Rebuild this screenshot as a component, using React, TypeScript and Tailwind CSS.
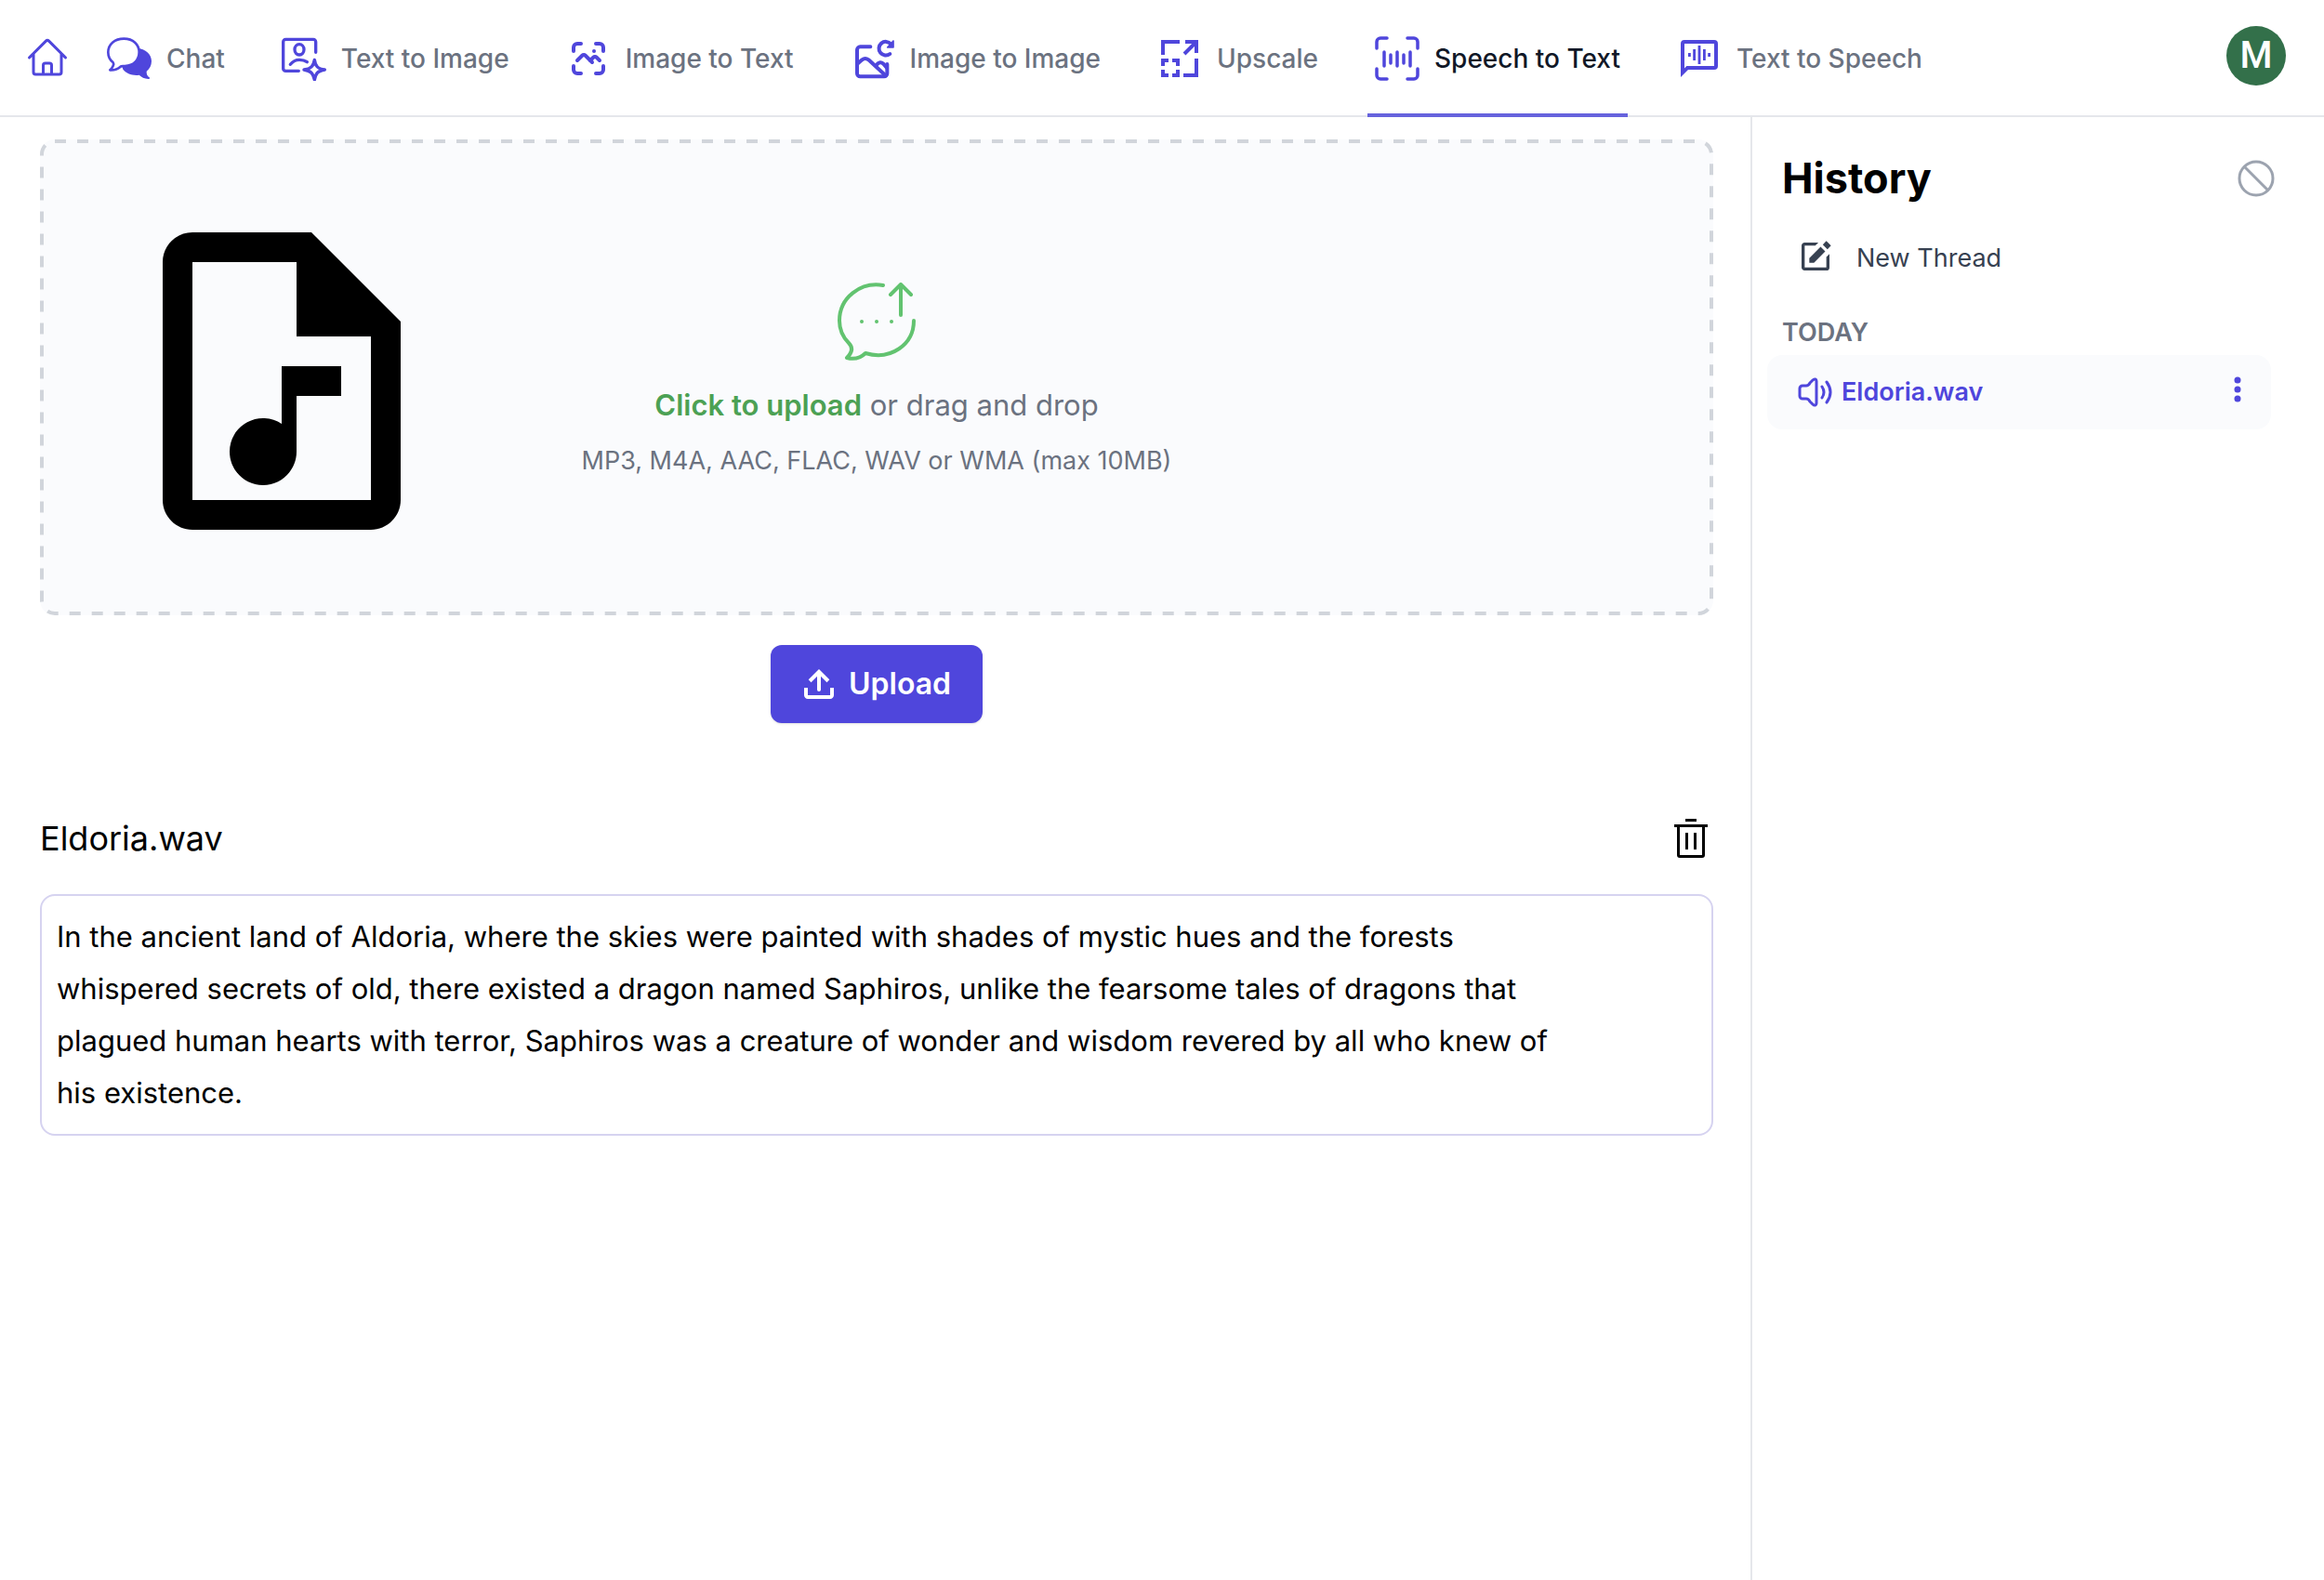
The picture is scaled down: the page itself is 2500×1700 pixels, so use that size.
import React from "react";
import { HiOutlineHome, HiOutlineNoSymbol } from "react-icons/hi2";
import { TbPhotoScan } from "react-icons/tb";
import { MdOutlineAudioFile } from "react-icons/md";
import { CgSoftwareUpload } from "react-icons/cg";
import { BiSolidEdit } from "react-icons/bi";

const iconBox = "size-12 shrink-0 text-[#4f46dc]";

function ChatIcon() {
  return (
    <svg className={iconBox} viewBox="45 51 144 144" aria-hidden="true">
      <path
        fill="currentColor"
        d="M140 89C172 91 189 110 189 131C189 145 183 155 173 164C172 173 176 180 182 184C185 187 183 189 179 189C166 188 156 183 149 176C127 179 107 171 97 158L92 140Z"
      />
      <path
        fill="white"
        stroke="currentColor"
        strokeWidth="8"
        strokeLinejoin="round"
        d="M100 59C70 59 49 77 49 103C49 117 55 128 65 136C69 141 64 152 55 160C68 161 80 157 89 149C93 146 98 148 103 147C131 146 149 128 149 103C149 77 129 59 100 59Z"
      />
    </svg>
  );
}

function PortraitSparkIcon() {
  return (
    <svg
      className={iconBox}
      viewBox="615 52 144 144"
      fill="none"
      stroke="currentColor"
      strokeWidth="10"
      strokeLinecap="round"
      strokeLinejoin="round"
      aria-hidden="true"
    >
      <path d="M725 104V70a8 8 0 0 0-8-8H628a8 8 0 0 0-8 8v86a8 8 0 0 0 8 8h42" />
      <ellipse cx="672" cy="95" rx="15" ry="17" />
      <path d="M643 143C650 134 660 128 672 128C682 128 690 130 697 135" />
      <path d="M721 128C724 149 731 157 754 160C731 164 725 171 721 193C716 171 710 164 687 160C710 157 717 149 721 128Z" />
    </svg>
  );
}

function ImageRefreshIcon() {
  return (
    <svg
      className={iconBox}
      viewBox="945 54 144 144"
      fill="none"
      stroke="currentColor"
      strokeWidth="12"
      strokeLinecap="round"
      strokeLinejoin="round"
      aria-hidden="true"
    >
      <path d="M1009 88H976a10 10 0 0 0-10 10v76a10 10 0 0 0 10 10h77a10 10 0 0 0 10-10V144" />
      <path d="M967 143L982 130Q992 122 1003 130L1058 181" />
      <path d="M1029 146Q1040 133 1051 143L1062 156" />
      <path d="M1072 111A22 22 0 1 1 1075 79" />
      <path d="M1083 69V90H1064Z" fill="currentColor" strokeWidth="5" />
    </svg>
  );
}

function UpscaleIcon() {
  return (
    <svg className={iconBox} viewBox="0 0 24 24" fill="none" stroke="currentColor" strokeWidth="2" aria-hidden="true">
      <path d="M12 3H3v7" />
      <path d="M15 3h6v6M20.5 3.5L14.5 9.5" />
      <path d="M21 12v9h-7" />
      <path d="M3 16v-3h3M8 13h3v3M3 18v3h3M8 21h3v-3" />
    </svg>
  );
}

function SpeechScanIcon() {
  return (
    <svg
      className={iconBox}
      viewBox="0 0 48 48"
      fill="none"
      stroke="currentColor"
      strokeWidth="3.5"
      strokeLinecap="round"
      aria-hidden="true"
    >
      <path d="M2 13V6a4 4 0 0 1 4-4h7M35 2h7a4 4 0 0 1 4 4v7M46 35v7a4 4 0 0 1-4 4h-7M13 46H6a4 4 0 0 1-4-4v-7" />
      <path d="M10 17v15M17 20v9M24 17v15M31 20v9M38 17v15" />
    </svg>
  );
}

function VoiceBubbleIcon() {
  return (
    <svg className={iconBox} viewBox="0 0 24 24" fill="currentColor" aria-hidden="true">
      <path d="M20 2H4a2 2 0 0 0-2 2v18l4-4h14a2 2 0 0 0 2-2V4a2 2 0 0 0-2-2Zm0 14H5.2L4 17.2V4h16Z" />
      <path d="M6 9h1.4v2H6zM8.6 7H10v6H8.6zM11.3 5h1.4v10h-1.4zM14 7h1.4v6H14zM16.6 9H18v2h-1.4z" />
    </svg>
  );
}

function ChatUploadIcon() {
  return (
    <svg
      className="size-[84px] text-[#62c370]"
      viewBox="0 0 84 84"
      fill="none"
      stroke="currentColor"
      strokeWidth="4"
      strokeLinecap="round"
      strokeLinejoin="round"
      aria-hidden="true"
    >
      <path d="M49 3C25 -1 2 16 2 41C2 51 6 59 12 65C17 70 16 75 10 81C18 83 25 81 30 76C57 84 82 67 82 41" />
      <path d="M68 35V2M57 13L68 2L79 13" />
      <path d="M26 42h.01M42 42h.01M58 42h.01" strokeWidth="4" />
    </svg>
  );
}

function SpeakerIcon() {
  return (
    <svg
      className="size-10"
      viewBox="0 0 40 40"
      fill="none"
      stroke="currentColor"
      strokeWidth="3"
      strokeLinecap="round"
      strokeLinejoin="round"
      aria-hidden="true"
    >
      <path d="M3 16a3 3 0 0 1 3-3h4c2 0 3-1 4-3l3-3c2-2 4-1 4 1v24c0 2-2 3-4 1l-3-3c-1-2-2-3-4-3H6a3 3 0 0 1-3-3Z" />
      <path d="M27 14q4 6 0 12M32 9q8 11 0 22" />
    </svg>
  );
}

function MoreIcon() {
  return (
    <svg className="size-8" viewBox="0 0 32 32" fill="currentColor" aria-hidden="true">
      <circle cx="16" cy="6" r="3.5" />
      <circle cx="16" cy="16" r="3.5" />
      <circle cx="16" cy="26" r="3.5" />
    </svg>
  );
}

function TrashIcon() {
  return (
    <svg className="size-12" viewBox="0 0 32 32" fill="currentColor" aria-hidden="true">
      <path d="M12 12h2v12h-2zM18 12h2v12h-2zM4 6v2h2v20a2 2 0 0 0 2 2h16a2 2 0 0 0 2-2V8h2V6Zm4 22V8h16v20ZM12 2h8v2h-8z" />
    </svg>
  );
}

function DashedOutline() {
  return (
    <svg className="pointer-events-none absolute inset-0 size-full p-0.5" overflow="visible" aria-hidden="true">
      <rect
        width="100%"
        height="100%"
        rx="14"
        fill="none"
        stroke="#d1d5db"
        strokeWidth="4"
        strokeDasharray="12 12"
      />
    </svg>
  );
}

const tabs = [
  { label: "Chat", icon: <ChatIcon /> },
  { label: "Text to Image", icon: <PortraitSparkIcon /> },
  { label: "Image to Text", icon: <TbPhotoScan className={iconBox} /> },
  { label: "Image to Image", icon: <ImageRefreshIcon /> },
  { label: "Upscale", icon: <UpscaleIcon /> },
  { label: "Speech to Text", icon: <SpeechScanIcon />, active: true },
  { label: "Text to Speech", icon: <VoiceBubbleIcon /> },
];

export default function App() {
  return (
    <div className="flex min-h-screen flex-col bg-white font-['Inter',sans-serif] text-black">
      <header className="flex h-[126px] items-stretch border-b-2 border-gray-200 pr-[41px] pl-[27px]">
        <a href="#home" aria-label="Home" className="flex items-center pr-8">
          <HiOutlineHome className={iconBox} />
        </a>
        <nav className="-mb-0.5 flex gap-[45px]">
          {tabs.map((tab) => (
            <a
              key={tab.label}
              href={"#" + tab.label.toLowerCase().replaceAll(" ", "-")}
              aria-current={tab.active ? "page" : undefined}
              className={
                tab.active
                  ? "flex items-center gap-4 border-b-4 border-[#6663dd] px-2 pt-1 text-[28px] font-medium whitespace-nowrap text-[#111827]"
                  : "flex items-center gap-4 border-b-4 border-transparent px-2 pt-1 text-[28px] font-medium whitespace-nowrap text-[#6b7280]"
              }
            >
              {tab.icon}
              {tab.label}
            </a>
          ))}
        </nav>
        <button
          type="button"
          aria-label="Account"
          className="mt-7 ml-auto size-16 rounded-full bg-[#33704a] font-['Roboto',sans-serif] text-[40px] leading-none font-medium text-white"
        >
          M
        </button>
      </header>

      <div className="flex flex-1">
        <main className="min-w-0 flex-1 pt-6 pr-10 pl-[43px]">
          <label className="relative grid h-[512px] cursor-pointer grid-cols-[1fr_auto_1fr] items-center rounded-2xl bg-[#fafbfd] px-1 pt-2">
            <DashedOutline />
            <MdOutlineAudioFile className="ml-16 size-96" />
            <span className="flex flex-col items-center text-center text-[#6b7280]">
              <ChatUploadIcon />
              <span className="mt-6 text-[31px] leading-12">
                <span className="font-semibold text-[#4ca154]">Click to upload</span> or drag and drop
              </span>
              <span className="mt-4 text-[27px] leading-10">MP3, M4A, AAC, FLAC, WAV or WMA (max 10MB)</span>
            </span>
            <input type="file" accept="audio/*" className="sr-only" />
          </label>

          <div className="mt-8 flex justify-center">
            <button
              type="button"
              className="flex h-[84px] items-center gap-2 rounded-xl bg-[#4f46dc] pr-[34px] pl-7 text-[32px] font-semibold text-white shadow-sm"
            >
              <CgSoftwareUpload className="size-12" />
              Upload
            </button>
          </div>

          <section className="mt-[100px]">
            <div className="flex items-center justify-between">
              <h2 className="text-[36px] leading-12">Eldoria.wav</h2>
              <button type="button" aria-label="Delete transcript">
                <TrashIcon />
              </button>
            </div>
            <div className="mt-9 rounded-2xl border-2 border-[#d6d3f0] p-4">
              <p className="max-w-[1620px] text-[31px] leading-14">
                In the ancient land of Aldoria, where the skies were painted with shades of mystic hues and the forests
                whispered secrets of old, there existed a dragon named Saphiros, unlike the fearsome tales of dragons
                that plagued human hearts with terror, Saphiros was a creature of wonder and wisdom revered by all who
                knew of his existence.
              </p>
            </div>
          </section>
        </main>

        <aside className="w-[617px] shrink-0 border-l-2 border-gray-200 pt-[38px] pr-[57px] pl-4">
          <div className="flex items-center justify-between pl-4">
            <h1 className="text-[45px] leading-14 font-bold">History</h1>
            <button type="button" aria-label="Clear history" className="-mr-2 text-[#9ca3af]">
              <HiOutlineNoSymbol className="size-12" />
            </button>
          </div>
          <button type="button" className="mt-[30px] flex h-14 items-center gap-6 pl-8 text-[27px] text-[#374151]">
            <BiSolidEdit className="mb-1 size-10" />
            New Thread
          </button>
          <h2 className="mt-8 pl-4 text-[27px] leading-10 font-semibold text-[#6b7280]">TODAY</h2>
          <div className="mt-1 flex h-20 items-center rounded-2xl bg-[#fafbfd] pr-5 pl-8 text-[#4f46dc]">
            <a href="#eldoria" className="flex flex-1 items-center gap-2 text-[27px] font-semibold">
              <SpeakerIcon />
              Eldoria.wav
            </a>
            <button type="button" aria-label="Thread options" className="mb-1.5">
              <MoreIcon />
            </button>
          </div>
        </aside>
      </div>
    </div>
  );
}
